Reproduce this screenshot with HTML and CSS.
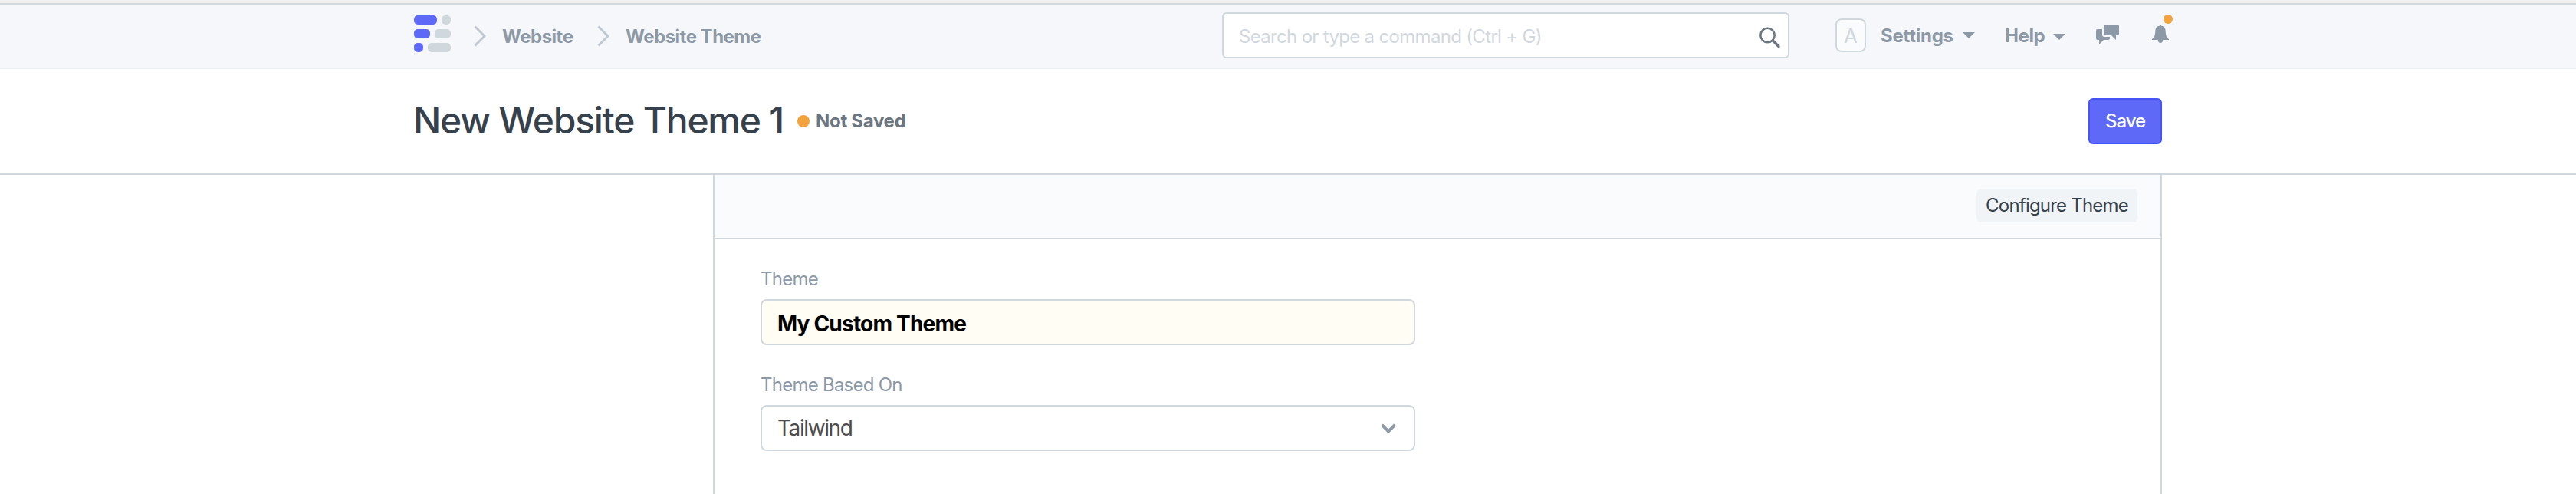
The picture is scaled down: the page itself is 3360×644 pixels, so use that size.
FILE: index.html
```html
<!DOCTYPE html>
<html lang="en">
<head>
<meta charset="utf-8">
<title>New Website Theme 1</title>
<link rel="stylesheet" href="styles.css">
</head>
<body>
<header class="navbar">
  <div class="container nav-row">
    <svg class="logo" viewBox="0 0 48 48"><g fill="#5e69f8"><rect width="30" height="12" rx="5"/><rect y="18" width="21" height="12" rx="5"/><rect y="36" width="12" height="12" rx="5"/></g><g fill="#d1d8dd"><rect x="36" width="12" height="12" rx="5"/><rect x="27" y="18" width="21" height="12" rx="5"/><rect x="18" y="36" width="30" height="12" rx="5"/></g></svg>
    <nav class="crumbs">
      <svg class="sep" viewBox="0 0 16 28"><path d="M1.500 1.500 14 14 1.500 26.500"/></svg>
      <a class="crumb crumb-first">Website</a>
      <svg class="sep" viewBox="0 0 16 28"><path d="M1.500 1.500 14 14 1.500 26.500"/></svg>
      <a class="crumb">Website Theme</a>
    </nav>
    <div class="search"><span class="placeholder">Search or type a command (Ctrl + G)</span>
      <svg class="search-icon" viewBox="0 0 28 28"><circle cx="10.500" cy="11" r="9.200"/><path d="M17.500 18 25 25.500" class="handle"/></svg>
    </div>
    <div class="tools">
      <span class="avatar">A</span>
      <span class="menu settings">Settings</span><i class="caret"></i>
      <span class="menu help">Help</span><i class="caret caret-help"></i>
      <svg class="chat" viewBox="0 0 30 26"><path d="M12 0h16q2 0 2 2v10q0 2-2 2h-2v6l-6-6h-8q-2 0-2-2V2q0-2 2-2z"/><path d="M2 6h6v7q0 3 3 3h7v2q0 2-2 2h-6l-6 6v-6H2q-2 0-2-2V8q0-2 2-2z"/></svg>
      <span class="bell-wrap"><svg class="bell" viewBox="0 0 22 24"><path d="M11 0q1 0 1.200 1.700C16.500 2 17.500 5 17.700 9c.3 5.500 1.300 7.500 4.300 10v1H14.200q-.2 4-3.200 4t-3.200-4H0v-1c3-2.500 4-4.500 4.300-10 .2-4 1.200-7 5.500-7.300Q10 0 11 0z"/></svg><i class="badge"></i></span>
    </div>
  </div>
</header>
<section class="page-head">
  <div class="container head-row">
    <h1>New Website Theme 1</h1>
    <i class="dot"></i><span class="status">Not Saved</span>
    <button class="save">Save</button>
  </div>
</section>
<main class="container body-row">
  <div class="panel">
    <div class="toolbar"><button class="configure">Configure Theme</button></div>
    <form class="form">
      <label class="label">Theme</label>
      <div class="field bold"><span>My Custom Theme</span></div>
      <label class="label label-second">Theme Based On</label>
      <div class="field"><span class="option">Tailwind</span><svg class="chevron" viewBox="0 0 20 14"><path d="M1.500 1.800 10 10.300 18.500 1.800"/></svg></div>
    </form>
  </div>
</main>
</body>
</html>
```
FILE: styles.css
```css
* { box-sizing: border-box; }
body { margin: 0; background: #fff; font-family: Inter, sans-serif; font-size: 24px; color: #36414c; height: 644px; overflow: hidden; display: flex; flex-direction: column; }
.container { width: 2280px; margin: 0 auto; }
.navbar { flex: none; height: 90px; border-top: 4px solid #f2f1f0; border-bottom: 2px solid #ebeff2; background: #f5f7fb; box-shadow: inset 0 2px #d1d8dd; }
.nav-row { display: flex; align-items: flex-start; height: 84px; }
.logo { width: 48px; height: 48px; margin-top: 16px; flex: none; }
.crumbs { flex: none; display: flex; align-items: center; margin: 28px 0 0 30px; width: 976px; height: 30px; }
.sep { width: 16px; height: 28px; flex: none; fill: none; stroke: #c0c9d1; stroke-width: 3; }
.crumb { margin-left: 21px; font-weight: 700; color: #8d99a6; white-space: nowrap; letter-spacing: -.5px; }
.crumb-first { width: 124px; }
.search { width: 740px; height: 60px; margin-top: 12px; border: 2px solid #d1d8dd; border-radius: 6px; background: #fff; display: flex; align-items: center; justify-content: space-between; padding: 2px 9px 0 20px; flex: none; color: #d1d8dd; }
.placeholder { letter-spacing: -.68px; white-space: nowrap; }
.search-icon { width: 28px; height: 28px; margin-top: 3px; fill: none; stroke: #6c7680; stroke-width: 2.5; }
.handle { stroke-width: 3.5; stroke-linecap: round; }
.tools { flex: none; display: flex; align-items: center; margin: 20px 0 0 60px; height: 44px; }
.avatar { width: 40px; height: 44px; border: 2px solid #d1d8dd; border-radius: 8px; background: #fafbfc; color: #d1d8dd; font-size: 26px; display: flex; align-items: center; justify-content: center; }
.menu { font-weight: 700; color: #8d99a6; letter-spacing: -.4px; }
.settings { margin-left: 19px; width: 98px; letter-spacing: -.25px; }
.help { margin-left: 39px; width: 54px; }
.caret { border: 8px solid transparent; border-top-color: #8d99a6; border-bottom: 0; margin-left: 9px; }
.caret-help { margin-top: 4px; }
.chat { width: 30px; height: 26px; margin: 0 0 2px 40px; fill: #8d99a6; }
.bell-wrap { position: relative; width: 22px; height: 24px; margin: 0 0 4px 43px; }
.bell { display: block; width: 22px; height: 24px; fill: #8d99a6; }
.badge { position: absolute; right: -5px; top: -13px; width: 12px; height: 12px; border-radius: 50%; background: #f2a33c; }
.page-head { height: 138px; border-bottom: 2px solid #d1d8dd; flex: none; }
.head-row { display: flex; align-items: center; height: 136px; }
h1 { margin: 0 0 3px -1px; font-size: 48px; font-weight: 500; width: 501px; white-space: nowrap; letter-spacing: -1.25px; }
.dot { width: 16px; height: 16px; border-radius: 50%; background: #f2a33c; }
.status { margin: 0 0 2px 8px; font-weight: 700; color: #6c7680; letter-spacing: -.3px; }
button { font-family: inherit; font-size: 24px; padding: 0; white-space: nowrap; }
.save { margin-left: auto; width: 96px; height: 60px; padding-bottom: 1px; border: 2px solid #4553f8; border-radius: 6px; background: #5e69f8; color: #fff; font-weight: 500; letter-spacing: -1.1px; }
.body-row { flex: 1; display: flex; justify-content: flex-end; }
.panel { width: 1890px; border: solid #d1d8dd; border-width: 0 2px; }
.toolbar { height: 84px; background: #fafbfc; border-bottom: 2px solid #d1d8dd; display: flex; justify-content: flex-end; padding: 18px 30px 0 0; }
.configure { width: 210px; height: 44px; padding-bottom: 1px; border: 0; border-radius: 6px; background: #f0f4f7; color: #36414c; letter-spacing: -.8px; }
.form { width: 914px; padding: 36px 0 0 60px; }
.label { display: block; width: fit-content; height: 42px; line-height: 32px; color: #8d99a6; letter-spacing: -.75px; }
.label-second { margin-top: 36px; }
.field { height: 60px; border: 2px solid #d1d8dd; border-radius: 8px; display: flex; align-items: center; justify-content: space-between; padding: 0 23px 0 20px; font-size: 28px; color: #4c4c4c; }
.bold { padding-top: 4px; background: #fffdf4; color: #000; font-weight: 700; letter-spacing: -.8px; }
.option { letter-spacing: -1.4px; }
.chevron { width: 20px; height: 14px; margin-top: 2px; fill: none; stroke: #8d99a6; stroke-width: 4; }
```
